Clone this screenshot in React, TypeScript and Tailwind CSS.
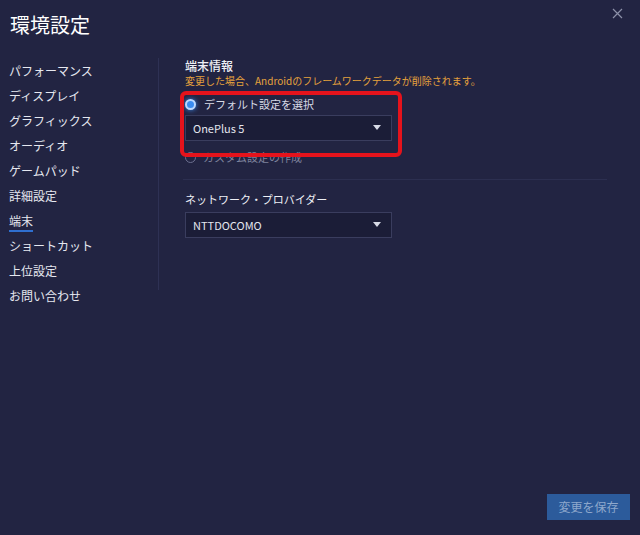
import React from "react";

const menu = [
  "パフォーマンス",
  "ディスプレイ",
  "グラフィックス",
  "オーディオ",
  "ゲームパッド",
  "詳細設定",
  "端末",
  "ショートカット",
  "上位設定",
  "お問い合わせ",
];

function Caret() {
  return (
    <svg width="8" height="6" viewBox="0 0 8 6" className="shrink-0">
      <path d="M0 0 L8 0 L4 5 Z" fill="#d8dbe6" />
    </svg>
  );
}

function Select({ value }: { value: string }) {
  return (
    <div className="flex items-center justify-between w-[207px] h-[26px] pl-[7px] pr-[10px] bg-[#1b1d37] border border-[#3a3d5e] text-[11px] text-[#e4e6ee]">
      <span>{value}</span>
      <Caret />
    </div>
  );
}

export default function App() {
  const active = "端末";
  return (
    <div
      className="relative flex flex-col w-[640px] h-[535px] bg-[#222442] text-[#e6e8f0] overflow-hidden"
      style={{ fontFamily: '"Noto Sans CJK JP", "Noto Sans", sans-serif' }}
    >
      <div className="flex items-start justify-between h-[58px] pl-[10px] pr-[17px]">
        <h1 className="mt-[10px] text-[20px] leading-[30px] text-white">環境設定</h1>
        <svg width="11" height="11" viewBox="0 0 11 11" className="mt-[8px]">
          <path d="M1 1 L10 10 M10 1 L1 10" stroke="#8c90a8" strokeWidth="1.2" />
        </svg>
      </div>

      <div className="flex">
        <nav className="w-[158px] pl-[9px]">
          {menu.map((m) => (
            <div key={m} className="h-[25px] flex items-center text-[12px]">
              <span
                className={
                  m === active
                    ? "leading-[16px] border-b-2 border-[#2f6fd0] pb-[1px] mt-[3px]"
                    : "leading-[16px]"
                }
              >
                {m}
              </span>
            </div>
          ))}
        </nav>
        <div className="w-px h-[232px] bg-[#2e3154]" />

        <div className="flex-1 pl-[26px] pr-[33px]">
          <div className="text-[12px] leading-[16px] font-medium text-[#eef0f6]">端末情報</div>
          <div className="text-[10px] leading-[14px] text-[#e6a23c]">
            変更した場合、Androidのフレームワークデータが削除されます。
          </div>

          <div className="flex items-center gap-[8px] h-[18px] mt-[7px]">
            <span className="w-[11px] h-[11px] rounded-full bg-[#3a8cf0] border-2 border-[#bcd9ff] shadow-[0_0_5px_#3a8cf0]" />
            <span className="text-[11px] text-[#d8dbe6]">デフォルト設定を選択</span>
          </div>
          <div className="mt-[2px]">
            <Select value="OnePlus 5" />
          </div>
          <div className="flex items-center gap-[7px] h-[18px] mt-[7px]">
            <span className="w-[11px] h-[11px] rounded-full border border-[#6c7090]" />
            <span className="text-[11px] text-[#7e829c]">カスタム設定の作成</span>
          </div>

          <div className="mt-[13px] h-px bg-[#2c2f50] -ml-[2px]" />

          <div className="mt-[11px] text-[11px] leading-[16px] text-[#eef0f6]">ネットワーク・プロバイダー</div>
          <div className="mt-[5px]">
            <Select value="NTTDOCOMO" />
          </div>
        </div>
      </div>

      <div className="mt-auto flex justify-end pr-[10px] pb-[15px]">
        <button className="w-[83px] h-[26px] bg-[#2c5b9b] text-[12px] text-[#8ea8cc]">変更を保存</button>
      </div>

      <div className="absolute left-[180px] top-[91px] w-[222px] h-[66px] border-4 border-[#e5131c] rounded-[6px]" />
    </div>
  );
}
